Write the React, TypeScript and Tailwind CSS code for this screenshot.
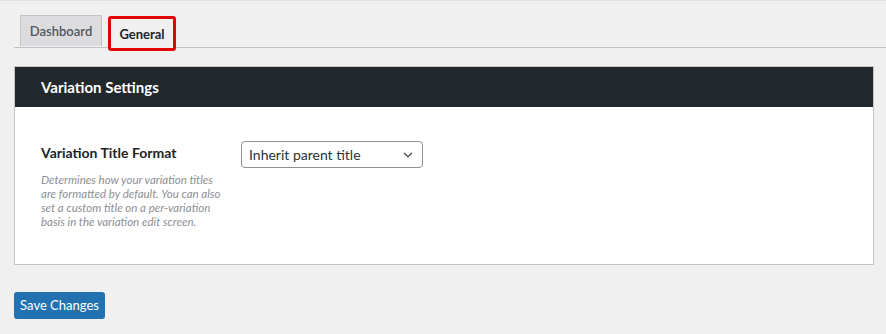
import { ChevronDown } from "lucide-react";

const font = { fontFamily: 'Lato, "Noto Sans", sans-serif' };

export default function App() {
  return (
    <div
      className="w-[886px] h-[334px] bg-[#f0f0f1] border-t border-[#e2e2e4] overflow-hidden"
      style={font}
    >
      <div className="flex items-end gap-[6px] pl-[6px] pt-[14px] ml-[14px] border-b border-[#c3c4c7] h-[47px]">
        <button className="h-[31px] w-[82px] bg-[#dcdcde] border border-[#c3c4c7] border-b-0 text-[13px] font-semibold text-[#50575e] mb-[1px] leading-none">
          Dashboard
        </button>
        <div className="h-[35px] w-[68px] border-[3px] border-[#e10600] rounded-[3px] -mb-[4px] flex items-center justify-center bg-[#f0f0f1]">
          <span className="text-[13px] font-bold text-[#1d2327] leading-none mt-[1px]">
            General
          </span>
        </div>
      </div>

      <div className="ml-[14px] mr-[12px] mt-[18px] border border-[#c3c4c7] bg-white">
        <div className="h-[40px] bg-[#23282d] flex items-center pl-[26px]">
          <h2 className="text-[15px] font-bold text-white">Variation Settings</h2>
        </div>
        <div className="flex pl-[26px] pt-[37px] pb-[35px]">
          <div className="w-[200px]">
            <div className="text-[14px] font-bold text-[#1d2327] leading-[18px]">
              Variation Title Format
            </div>
            <p className="mt-[11px] w-[185px] text-[11.5px] italic leading-[14px] text-[#8c8f94]">
              Determines how your variation titles are formatted by default. You can also
              set a custom title on a per-variation basis in the variation edit screen.
            </p>
          </div>
          <div className="-mt-[3px]">
            <div className="w-[182px] h-[27px] border border-[#8c8f94] rounded-[4px] flex items-center justify-between pl-[7px] pr-[7px] text-[14px] text-[#2c3338]">
              <span>Inherit parent title</span>
              <ChevronDown size={14} strokeWidth={2.5} className="text-[#50575e]" />
            </div>
          </div>
        </div>
      </div>

      <button className="ml-[14px] mt-[27px] h-[27px] w-[91px] bg-[#2271b1] rounded-[3px] text-white text-[13px] leading-none">
        Save Changes
      </button>
    </div>
  );
}
